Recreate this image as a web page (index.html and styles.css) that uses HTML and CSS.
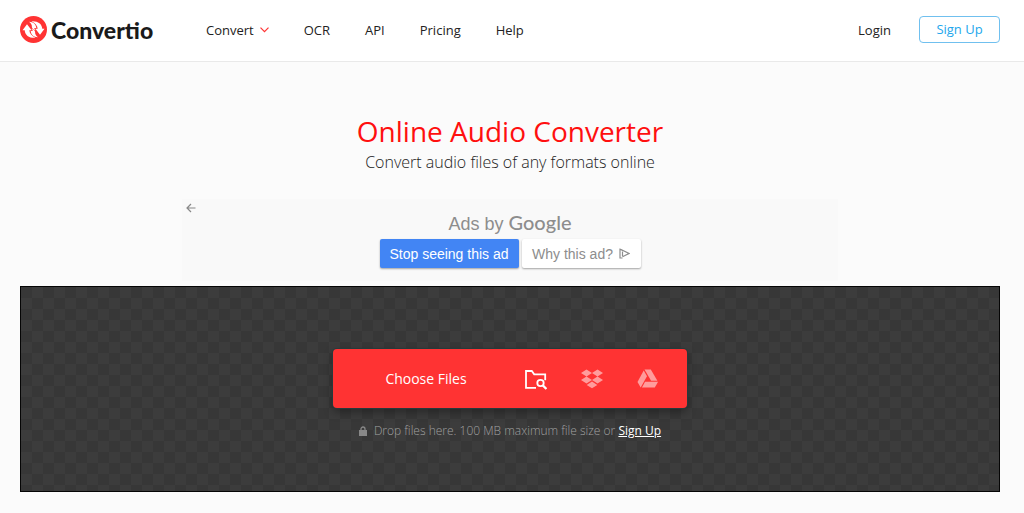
FILE: index.html
```html
<!DOCTYPE html>
<html lang="en">
<head>
<meta charset="utf-8">
<meta name="viewport" content="width=device-width, initial-scale=1">
<title>Online Audio Converter</title>
<link rel="stylesheet" href="styles.css">
</head>
<body>
<header class="header">
  <a class="logo" href="#">
    <svg class="logo-mark" viewBox="0 0 27 27" aria-hidden="true">
      <circle cx="13.500" cy="13.500" r="13.500" fill="#ff3333"/>
      <path d="M2.500 14.200 7 8.200l4.600 6H9.300c.3 3.300 2.400 5.800 6.200 7.600-6 .5-10.500-2.400-10.800-7.600z" fill="#fff"/>
      <path d="M24.500 12.800 20 18.800l-4.600-6h2.300c-.3-3.300-2.400-5.800-6.200-7.600 6-.5 10.500 2.400 10.800 7.600z" fill="#fff"/>
      <path d="M9 5.700c4.500.2 7 2.600 7.300 6.300h-2.200l1.500 2.200C13 13.500 11.500 12.300 11.800 9.500 11.200 7.700 10.300 6.500 9 5.700zM18 21.300c-4.500-.2-7-2.600-7.300-6.300h2.200l-1.500-2.200c2.600.7 4.100 1.900 3.800 4.700.6 1.800 1.500 3 2.800 3.800z" fill="#fff"/>
    </svg>
    <span>Convertio</span>
  </a>
  <nav class="nav">
    <a href="#">Convert
      <svg class="chevron" viewBox="0 0 9 6" aria-hidden="true"><path d="M.5.7l4 4 4-4" fill="none" stroke="#ff3333" stroke-width="1.200"/></svg>
    </a>
    <a href="#">OCR</a>
    <a href="#">API</a>
    <a href="#">Pricing</a>
    <a href="#">Help</a>
  </nav>
  <div class="account">
    <a href="#">Login</a>
    <a class="signup" href="#">Sign Up</a>
  </div>
</header>
<main class="main">
  <h1 class="title">Online Audio Converter</h1>
  <p class="subtitle">Convert audio files of any formats online</p>
  <section class="ad" aria-label="Advertisement">
    <button class="ad-back" aria-label="Back">
      <svg viewBox="0 0 10 10" aria-hidden="true"><path d="M9.500 5H1m4-4L1 5l4 4" fill="none" stroke="#888" stroke-width="1.200"/></svg>
    </button>
    <div class="ad-body">
      <p class="ad-by">Ads by <span class="google">Google</span></p>
      <div class="ad-actions">
        <button class="ad-button ad-stop">Stop seeing this ad</button>
        <button class="ad-button ad-why">Why this ad?
          <svg viewBox="0 0 11 11" aria-hidden="true"><path d="M3.500 3.500v4.800M1 1l9 4.500-6.500 3.200M1 .500v9.500h2.500M1 1l2.500 1.500" fill="none" stroke="#8d8d8d" stroke-width="1.200"/></svg>
        </button>
      </div>
    </div>
  </section>
  <section class="dropzone">
    <div class="picker">
      <button class="choose">Choose Files</button>
      <button class="source" aria-label="From computer">
        <svg viewBox="0 0 22 22" aria-hidden="true"><g fill="none" stroke="#fff" stroke-width="1.800"><path d="M11 19.800H1V3h5.800l2.400 3.300h11v6"/><circle cx="15.500" cy="15" r="3.200"/><path d="m17.800 17.400 3.600 3.600" stroke-width="2.200"/></g></svg>
      </button>
      <button class="source" aria-label="From Dropbox">
        <svg viewBox="0 0 22 22" aria-hidden="true"><g fill="#ff9c9c"><path d="M5.500 1.500 11 5 5.500 8.500 0 5zM16.500 1.500 22 5 16.500 8.500 11 5zM5.500 8.500 11 12 5.500 15.500 0 12zM16.500 8.500 22 12 16.500 15.500 11 12zM11 13.500l5.300 3.400L11 20.300l-5.300-3.400z"/></g></svg>
      </button>
      <button class="source" aria-label="From Google Drive">
        <svg viewBox="0 0 22 22" aria-hidden="true"><g fill="#ff9c9c"><path d="M7.500 1.500h6.300l6.600 11.300h-6.300z"/><path d="m6.700 2.500 3.300 5.700-6.300 11.300-3.200-5.600z"/><path d="M8.100 13.700h13l-3.300 5.800H4.900z"/></g></svg>
      </button>
    </div>
    <p class="hint">
      <svg class="lock" viewBox="0 0 8 10" aria-hidden="true"><path d="M0 4h8v6H0z" fill="#888"/><path d="M2 4.500V3a2 2 0 0 1 4 0v1.500" fill="none" stroke="#888" stroke-width="1.300"/></svg>
      <span>Drop files here. 100 MB maximum file size or <a href="#">Sign Up</a></span>
    </p>
  </section>
</main>
</body>
</html>
```
FILE: styles.css
```css
* { box-sizing: border-box; }
body {
  margin: 0;
  background: #fbfbfb;
  color: #222;
  font-family: "Open Sans", "Noto Sans", sans-serif;
  font-size: 13px;
}
h1, p { margin: 0; }
a { color: inherit; text-decoration: none; }
button { border: 0; padding: 0; font: inherit; cursor: pointer; background: none; }
svg { display: block; flex: none; }
.header {
  display: flex;
  align-items: center;
  height: 62px;
  padding: 0 24px 2px 20px;
  background: #fff;
  border-bottom: 1px solid #e9e9e9;
}
.logo {
  display: flex;
  align-items: center;
  gap: 4px;
  width: 186px;
  color: #1a1a1a;
  font-family: Lato, sans-serif;
  font-size: 23px;
  font-weight: 900;
  line-height: 26px;
}
.logo-mark { width: 27px; height: 27px; }
.nav { display: flex; gap: 35px; }
.nav a { display: flex; align-items: center; gap: 6px; }
.chevron { width: 9px; height: 6px; }
.account { display: flex; align-items: center; gap: 28px; margin-left: auto; }
.signup {
  width: 81px;
  border: 1px solid #70c0ef;
  border-radius: 4px;
  color: #22a7ec;
  line-height: 25px;
  text-align: center;
}
.main { padding: 49px 24px 21px 20px; text-align: center; }
.title { color: #ff0f0f; font-size: 28px; font-weight: 400; line-height: 40px; }
.subtitle { font-size: 16px; font-weight: 300; line-height: 22px; }
.ad {
  display: flex;
  max-width: 656px;
  height: 82px;
  margin: 26px auto 5px;
  padding: 4px;
  background: #f9f9f9;
  color: #8d8d8d;
  font-family: "Liberation Sans", Arial, sans-serif;
}
.ad-back { display: flex; width: 10px; height: 10px; }
.ad-back svg { width: 10px; height: 10px; }
.ad-body { flex: 1; padding: 9px 10px 0 0; }
.ad-by { font-size: 18px; line-height: 20px; }
.google { font-family: Lato, sans-serif; font-size: 20px; font-weight: 500; }
.ad-actions { display: flex; justify-content: center; gap: 3px; padding-top: 5px; }
.ad-button {
  display: flex;
  align-items: center;
  justify-content: center;
  gap: 6px;
  height: 29px;
  border-radius: 2px;
  box-shadow: 0 1px 2px rgba(0, 0, 0, 0.35);
  font-size: 14px;
  white-space: nowrap;
}
.ad-button svg { width: 11px; height: 11px; }
.ad-stop { width: 139px; background: #4285f4; color: #fff; }
.ad-why { width: 119px; background: #fff; color: #8d8d8d; }
.dropzone {
  display: flex;
  flex-direction: column;
  align-items: center;
  padding: 62px 20px 50px;
  border: 1px solid #050505;
  background: repeating-conic-gradient(#3c3c3c 0 25%, #373737 0 50%) 0 0 / 22px 22px;
}
.picker {
  display: flex;
  align-items: center;
  width: 354px;
  max-width: 100%;
  height: 59px;
  padding: 0 11px;
  border-radius: 4px;
  background: #ff3333;
  box-shadow: 0 0 0 1px #28393b, 0 4px 10px rgba(0, 0, 0, 0.35);
}
.choose { flex: 1; color: #fff; font-size: 14px; }
.source { display: flex; align-items: center; justify-content: center; width: 56px; height: 59px; }
.source svg { width: 22px; height: 22px; }
.hint {
  display: flex;
  align-items: center;
  gap: 7px;
  padding-top: 13px;
  color: #a0a0a0;
  font-size: 12px;
  font-weight: 300;
  line-height: 20px;
}
.hint a { color: #fff; font-weight: 400; text-decoration: underline; }
.lock { width: 8px; height: 10px; }
```
